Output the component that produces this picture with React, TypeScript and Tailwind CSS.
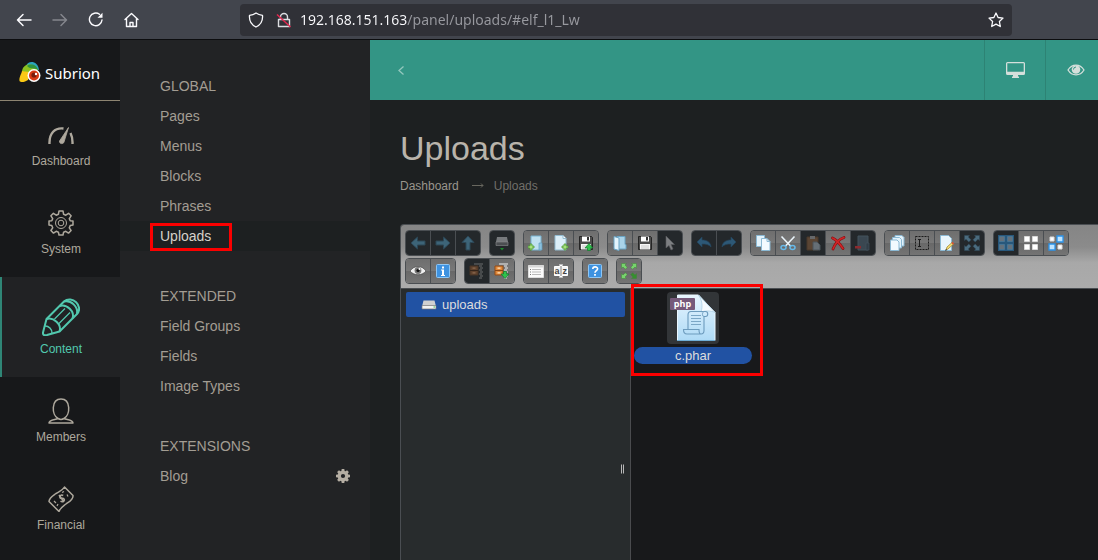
import { useState } from "react";
import type { ReactNode } from "react";

type Tool = { label: string; icon: ReactNode; disabled?: boolean };

function Svg({ size = 16, children }: { size?: number; children: ReactNode }) {
  return (
    <svg width={size} height={size} viewBox={`0 0 ${size} ${size}`} fill="none" aria-hidden>
      {children}
    </svg>
  );
}

/* ---------- toolbar icons ---------- */

const Arrow = ({ turn = 0 }: { turn?: number }) => (
  <Svg>
    <path d="M1 8 7.500 2v4H15v4H7.500v4Z" transform={`rotate(${turn} 8 8)`} fill="#3d6478" stroke="#2c4655" />
  </Svg>
);

const plus = (x: number, y: number) => (
  <path
    d={`M${x + 2} ${y}h2v2h2v2h-2v2h-2v-2h-2v-2h2z`}
    fill="#a6e07c"
    stroke="#4f9a35"
    strokeWidth="0.8"
  />
);

const download = (
  <path d="M9.500 8.500h3V11H15l-4 4.500L7 11h2.500Z" fill="#2fc24c" stroke="#137a2b" strokeWidth="0.7" />
);

const Netmount = () => (
  <Svg>
    <path d="m3 2-1 5h12l-1-5Z" fill="#777a7d" />
    <path d="M2 7h12v3.500H2Z" fill="#4b4e51" stroke="#8a8c8e" strokeWidth="0.6" />
    <path d="M6 13h4l-2 2.500Z" fill="#1e8a2e" />
  </Svg>
);

const Folder = ({ dim = false }: { dim?: boolean }) => (
  <>
    <path d="M3 1h10v14H3Z" fill={dim ? "#3a4751" : "#bfe0f0"} stroke={dim ? "#43525d" : "#78b3d1"} />
    <path d="M11 8h3v7h-3Z" fill={dim ? "#313d46" : "#8cc1de"} stroke={dim ? "#43525d" : "#619fbf"} strokeWidth="0.7" />
  </>
);

const Mkdir = () => (
  <Svg>
    <Folder />
    {plus(0, 9)}
  </Svg>
);

const Mkfile = () => (
  <Svg>
    <path d="M2 .500h8l3 3V15H2Z" fill="#dceff9" stroke="#93bcd2" />
    <path d="M10 .500v3h3" fill="#fff" stroke="#93bcd2" />
    {plus(9, 9)}
  </Svg>
);

const Disk = ({ arrowDown = false }: { arrowDown?: boolean }) => (
  <Svg>
    <path d="M1.500 1.500h12l1 1v12h-13Z" fill="#4d4d4d" stroke="#252525" />
    <path d="M4 1.500h8v5H4Z" fill="#fff" />
    <path d="M9 2h2v3.500H9Z" fill="#333" />
    <path d="M3 9h10v5.500H3Z" fill="#f7f7f7" />
    <path d="M4 11h8M4 13h8" stroke="#c9c9c9" />
    {arrowDown && (
      <path d="M9.500 15.500h3V13H15l-4-4.500L7 13h2.500Z" fill="#2fc24c" stroke="#137a2b" strokeWidth="0.7" />
    )}
  </Svg>
);

const OpenFolder = () => (
  <Svg>
    <path d="M5 1.500h8v8h1v4.500H5Z" fill="#a9d3e9" stroke="#6aa5c5" />
    <path d="M2 1.500 7 3v12.500L2 14Z" fill="#e3f4fc" stroke="#6aa5c5" />
  </Svg>
);

const Pointer = () => (
  <Svg>
    <path d="m4 1 8.500 8.500H9l2 4.500-2 1-2-4.500L4 13Z" fill="#7d7f82" stroke="#5a5c5f" strokeWidth="0.6" />
  </Svg>
);

const Undo = ({ flip = false }: { flip?: boolean }) => (
  <Svg>
    <path
      d="M1 7 6 2v3c5 0 8.500 2 9 7-2-2.500-5-3-9-3v3Z"
      transform={flip ? "translate(16 0) scale(-1 1)" : undefined}
      fill="#2d5876"
      stroke="#24455d"
      strokeWidth="0.7"
    />
  </Svg>
);

const Copy = () => (
  <Svg>
    <path d="M1.500.500h8v11h-8Z" fill="#e2f2fb" stroke="#8bb9d4" />
    <path d="M6.500 3.500h5.500l3 3v9H6.500Z" fill="#f2faff" stroke="#8bb9d4" />
    <path d="M12 3.500v3h3" stroke="#8bb9d4" />
  </Svg>
);

const Cut = () => (
  <Svg>
    <path d="m1.500 1.500 9.500 10M14.500 1.500 5 11.500" stroke="#eaf4fa" strokeWidth="1.600" />
    <ellipse cx="3.500" cy="12.500" rx="2.500" ry="2" stroke="#66b9e9" strokeWidth="1.500" />
    <ellipse cx="12.500" cy="12.500" rx="2.500" ry="2" stroke="#66b9e9" strokeWidth="1.500" />
  </Svg>
);

const Paste = () => (
  <Svg>
    <path d="M2 2h11v13H2Z" fill="#5a4534" stroke="#49382b" />
    <path d="M5 1h5v3H5Z" fill="#66686a" />
    <path d="M8 7h4l3 3v5H8Z" fill="#666f76" stroke="#4b545b" />
  </Svg>
);

const Remove = () => (
  <Svg>
    <path d="M2.500 3C7 5 10 9 13 13.500M14 2.500C9 4 5 9 3 14" stroke="#8d0d10" strokeWidth="2.800" strokeLinecap="round" />
    <path d="M2.500 3C7 5 10 9 13 13.500M14 2.500C9 4 5 9 3 14" stroke="#cf2527" strokeWidth="1.500" strokeLinecap="round" />
  </Svg>
);

const Empty = () => (
  <Svg>
    <Folder dim />
    <path d="M0 11h6v2.500H0Z" fill="#8b2b2f" />
  </Svg>
);

const Duplicate = () => (
  <Svg>
    <path d="M6 .500h7l2 2V11H6Z" fill="#e2f2fb" stroke="#8bb9d4" />
    <path d="M3.500 2.500h7l2 2V13h-9Z" fill="#e2f2fb" stroke="#8bb9d4" />
    <path d="M1.500 5h6.500l2 2v8.500H1.500Z" fill="#f2faff" stroke="#8bb9d4" />
  </Svg>
);

const Rename = () => (
  <Svg>
    <path d="M1.500 1.500h13v13h-13Z" stroke="#1b1b1b" strokeDasharray="2 1" />
    <path d="M4 4.500h3M4 11.500h3M5.500 4v8" stroke="#1b1b1b" />
  </Svg>
);

const Edit = () => (
  <Svg>
    <path d="M1.500.500h8l3 3v12h-11Z" fill="#e8f5fc" stroke="#8bb9d4" />
    <path d="m7 15 1-3 5-4.500 1.500 1.500-5.500 5Z" fill="#f5df77" stroke="#9a7d22" strokeWidth="0.7" />
    <path d="m13 7.500 1.500 1.500" stroke="#df4b32" strokeWidth="1.600" />
    <path d="m6 16 1-2 1 1Z" fill="#222" />
  </Svg>
);

const turns = [0, 90, 180, 270];

const Resize = () => (
  <Svg>
    {turns.map((turn) => (
      <path
        key={turn}
        transform={`rotate(${turn} 8 8)`}
        d="M.500.500h5L4.300 2 7 4.800 4.800 7 2 4.300.500 5.500Z"
        fill="#4a6b7e"
        stroke="#304b5b"
        strokeWidth="0.5"
      />
    ))}
  </Svg>
);

const Fullscreen = () => (
  <Svg size={18}>
    {turns.map((turn) => (
      <path
        key={turn}
        transform={`rotate(${turn} 9 9)`}
        d="M1.500 1.500h5L5 3l2.300 2.300-2 2L3 5 1.500 6.500Z"
        fill={turn === 180 ? "#368f2f" : "#77d46c"}
        stroke="#44803e"
        strokeWidth="0.5"
      />
    ))}
  </Svg>
);

const SelectAll = () => (
  <Svg>
    <path d="M0 0h16v16H0Z" fill="#28587c" />
    <path d="M1.500 1.500h5v5h-5zM9.500 1.500h5v5h-5zM1.500 9.500h5v5h-5zM9.500 9.500h5v5h-5z" fill="#64717c" stroke="#487492" />
  </Svg>
);

const SelectNone = () => (
  <Svg>
    <path d="M1.500 1.500h5v5h-5zM9.500 1.500h5v5h-5zM1.500 9.500h5v5h-5zM9.500 9.500h5v5h-5z" fill="#fff" stroke="#d7d7d7" />
  </Svg>
);

const SelectInvert = () => (
  <Svg>
    <path d="M2 2h4v4H2zM10 10h4v4h-4z" fill="#fff" stroke="#ddd" />
    <path d="M9 1h6v6H9zM1 9h6v6H1z" fill="#bfe4ff" stroke="#2b94ec" strokeWidth="1.300" />
  </Svg>
);

const Look = () => (
  <Svg>
    <path d="M0 8c4-6 12-6 16 0-4 5-12 5-16 0Z" fill="#efefef" stroke="#444" strokeWidth="0.7" />
    <circle cx="8" cy="7.500" r="3.400" fill="#777" />
    <circle cx="8" cy="7.500" r="1.600" fill="#111" />
    <circle cx="9.500" cy="6" r="1" fill="#fff" />
  </Svg>
);

const Info = () => (
  <Svg>
    <rect x="1.500" y="1.500" width="13" height="13" rx="1" fill="#3e92e0" stroke="#8dc6f5" />
    <path d="M7 3.500h2v2H7ZM6 6.500h3V12h1v1H6v-1h1V7.500H6Z" fill="#fff" />
  </Svg>
);

const Help = () => (
  <Svg>
    <rect x="1.500" y="1.500" width="13" height="13" rx="1" fill="#3e92e0" stroke="#8dc6f5" />
    <path d="M5.800 6c0-2.800 4.800-2.800 4.800-.200C10.600 7.700 8 7.500 8 9.800" stroke="#fff" strokeWidth="1.600" />
    <path d="M7.100 11h1.800v1.800H7.100Z" fill="#fff" />
  </Svg>
);

const Archive = ({ dim = false }: { dim?: boolean }) => (
  <Svg>
    <path d="M1 3h8v9H1Z" fill={dim ? "#60422d" : "#e0893b"} stroke={dim ? "#493526" : "#934d18"} />
    <path d="M1 7.500h8" stroke={dim ? "#34251b" : "#8a4614"} />
    <path d="M3.500 5.200h3M3.500 9.800h3" stroke={dim ? "#8b6a51" : "#ffe1bb"} strokeWidth="1.300" />
    <path d="M5 1h9" stroke={dim ? "#6a6c6e" : "#eee"} strokeWidth="1.200" />
    <path d="M10 3h3M11 5h3M10 7h3M11 9h3M10 11h3M11 13h3M10 15h3" stroke={dim ? "#6a6c6e" : "#eee"} />
    {!dim && download}
  </Svg>
);

const ListView = () => (
  <Svg>
    <path d="M.500 2.500h15v12H.500Z" fill="#fbfbfb" stroke="#ddd" />
    <path d="M.500 2.500h15v2H.500Z" fill="#d8d8d8" />
    <path d="M4 6.500h9M4 9h9M4 11.500h9" stroke="#bbb" />
    <path d="M2 6.500h1M2 9h1M2 11.500h1" stroke="#777" />
  </Svg>
);

const Sort = () => (
  <Svg>
    <path d="M1.500 3.500h13v9h-13Z" fill="#f4f4f4" stroke="#fff" />
    <text x="1.500" y="11" fill="#444" fontSize="9" fontWeight="700" fontFamily="Liberation Sans, sans-serif">
      a
    </text>
    <text x="9.500" y="11" fill="#444" fontSize="9" fontWeight="700" fontFamily="Liberation Sans, sans-serif">
      z
    </text>
    <path d="M8 3v10M6.500 1.500 8 3l1.500-1.500M6.500 14.500 8 13l1.500 1.500" stroke="#fff" strokeWidth="1.500" />
    <path d="M8 3v10" stroke="#444" strokeWidth="0.7" />
  </Svg>
);

const toolbar: Tool[][][] = [
  [
    [
      { label: "Back", icon: <Arrow />, disabled: true },
      { label: "Forward", icon: <Arrow turn={180} />, disabled: true },
      { label: "Up", icon: <Arrow turn={90} />, disabled: true },
    ],
    [{ label: "Mount network volume", icon: <Netmount />, disabled: true }],
    [
      { label: "New folder", icon: <Mkdir /> },
      { label: "New file", icon: <Mkfile /> },
      { label: "Upload files", icon: <Disk arrowDown /> },
    ],
    [
      { label: "Open", icon: <OpenFolder /> },
      { label: "Download", icon: <Disk /> },
      { label: "Get files", icon: <Pointer />, disabled: true },
    ],
    [
      { label: "Undo", icon: <Undo />, disabled: true },
      { label: "Redo", icon: <Undo flip />, disabled: true },
    ],
    [
      { label: "Copy", icon: <Copy /> },
      { label: "Cut", icon: <Cut /> },
      { label: "Paste", icon: <Paste />, disabled: true },
      { label: "Delete", icon: <Remove /> },
      { label: "Empty folder", icon: <Empty />, disabled: true },
    ],
    [
      { label: "Duplicate", icon: <Duplicate /> },
      { label: "Rename", icon: <Rename /> },
      { label: "Edit file", icon: <Edit /> },
      { label: "Resize image", icon: <Resize />, disabled: true },
    ],
    [
      { label: "Select all", icon: <SelectAll />, disabled: true },
      { label: "Select none", icon: <SelectNone /> },
      { label: "Invert selection", icon: <SelectInvert /> },
    ],
  ],
  [
    [
      { label: "Preview", icon: <Look /> },
      { label: "Get info", icon: <Info /> },
    ],
    [
      { label: "Extract files", icon: <Archive dim />, disabled: true },
      { label: "Create archive", icon: <Archive /> },
    ],
    [
      { label: "List view", icon: <ListView /> },
      { label: "Sort", icon: <Sort /> },
    ],
    [{ label: "Help", icon: <Help /> }],
    [{ label: "Full screen", icon: <Fullscreen /> }],
  ],
];

/* ---------- sidebar icons ---------- */

const Gauge = () => (
  <svg width="26" height="26" viewBox="0 0 26 26" fill="none" stroke="currentColor" aria-hidden>
    <path d="M1.500 22C1 11 7 5.500 15.500 6.500M22.500 11c1.500 3 2.200 6.500 2 11" strokeWidth="2.400" />
    <path d="M20.500 5.500 16 20c-.600 2.500-5 2-4.500-1Z" fill="currentColor" strokeWidth="0.8" />
  </svg>
);

const Gear = () => (
  <svg width="26" height="26" viewBox="0 0 26 26" fill="none" stroke="currentColor" aria-hidden>
    <path
      strokeWidth="1.500"
      strokeLinejoin="round"
      d="M11 1h4l.600 3.300 2.200.900 2.800-1.900 2.500 2.500-1.800 2.800.9 2.200L25 11v4l-2.800.6-.9 2.200 1.800 2.700-2.600 2.600-2.700-1.800-2.200.9L15 25h-4l-.600-2.800-2.200-.9-2.700 1.800-2.600-2.600 1.800-2.700-.9-2.200L1 15v-4l2.800-.2.900-2.200-1.800-2.800L5.400 3.300l2.800 1.900 2.200-.9Z"
    />
    <circle cx="13" cy="13" r="5.500" strokeWidth="1" />
    <circle cx="13" cy="13" r="2.800" strokeWidth="1" />
  </svg>
);

const Pencil = () => (
  <svg width="38" height="38" viewBox="0 0 38 38" fill="none" stroke="currentColor" strokeWidth="2" strokeLinejoin="round" aria-hidden>
    <path d="M1 34.500 4.500 21 22 3.500C30-3.500 42 8.500 35 16L17.500 33.500 5 37c-3 .6-4.300-.2-4-2.500Z" />
    <path d="M4.500 21c7-2.500 15.500 5.500 13 12.500M17.500 8c7.500-2.500 15.500 5.500 13 12.500M22 3.500c7-2 14.500 5.500 13 12.500" />
    <path d="M2.500 28c4-.5 8 3.500 7.500 7.500" strokeWidth="1.500" />
    <path d="M12.500 21 23 10.500M17 25.500 28 14.500" strokeWidth="1.200" />
  </svg>
);

const Person = () => (
  <svg width="26" height="26" viewBox="0 0 26 26" fill="none" stroke="currentColor" strokeWidth="1.500" aria-hidden>
    <path d="M10 20.500C3.500 17 3 1 13 1s9.500 16 3 19.500c3 1.300 9 1 9 4.500H1c0-3.500 6-3.200 9-4.500Z" strokeLinejoin="round" />
    <path d="M10 20.500c2 1.200 4 1.200 6 0" />
  </svg>
);

const Money = () => (
  <svg width="26" height="26" viewBox="0 0 26 26" fill="none" stroke="currentColor" strokeWidth="1.500" strokeLinejoin="round" aria-hidden>
    <path d="M16.500 1 25 9.500c.500 4-3.500 6-7 8.500-4 3-5.500 3.500-7 7.500L1 15.500c0-3.500 3.500-5.500 7-8C12 5 14.500 4.500 16.500 1Z" />
    <path d="M15.200 9.500c-2-1.300-4.400.6-3.200 2.300 1 1.400 3-.3 4 1.100 1.400 2-1.500 3.800-3.500 2.300M11 9l5 7" />
    <path d="m14 6.500 2-1M20 10.500l-1-2M9 20l1-2M6 15l2 2" strokeWidth="1.200" />
  </svg>
);

const mainNav = [
  { name: "Dashboard", icon: <Gauge /> },
  { name: "System", icon: <Gear /> },
  { name: "Content", icon: <Pencil /> },
  { name: "Members", icon: <Person /> },
  { name: "Financial", icon: <Money /> },
];

const subNav = [
  { title: "GLOBAL", links: ["Pages", "Menus", "Blocks", "Phrases", "Uploads"] },
  { title: "EXTENDED", links: ["Field Groups", "Fields", "Image Types"] },
  { title: "EXTENSIONS", links: ["Blog"] },
];

function BrowserBar() {
  const [url, setUrl] = useState("192.168.151.163/panel/uploads/#elf_l1_Lw");

  return (
    <div className="flex h-10 shrink-0 items-center border-b border-[#0c0d0f] bg-[#42454d] pl-4 pr-[86px] text-[#fbfbfe]">
      <div className="flex w-56 shrink-0 gap-5">
        <button type="button" aria-label="Go back">
          <Svg>
            <path d="M15 8H1.500M7 2.500 1.500 8 7 13.500" stroke="currentColor" strokeWidth="1.500" strokeLinecap="round" strokeLinejoin="round" />
          </Svg>
        </button>
        <button type="button" aria-label="Go forward" disabled className="text-[#85878d]">
          <Svg>
            <path d="M1 8h13.500M9 2.500 14.500 8 9 13.500" stroke="currentColor" strokeWidth="1.500" strokeLinecap="round" strokeLinejoin="round" />
          </Svg>
        </button>
        <button type="button" aria-label="Reload">
          <Svg>
            <path d="M11.500 2.300A6.300 6.300 0 1 0 14 8" stroke="currentColor" strokeWidth="1.400" strokeLinecap="round" />
            <path d="M14.500.800V5.800H9.500Z" fill="currentColor" />
          </Svg>
        </button>
        <button type="button" aria-label="Home">
          <Svg>
            <path d="m1 7.500 6.500-6 6.500 6M2.500 6.500v8h10v-8M6 14.500v-4h3v4" stroke="currentColor" strokeWidth="1.400" strokeLinecap="round" strokeLinejoin="round" />
          </Svg>
        </button>
      </div>
      <div className="flex h-8 min-w-0 flex-1 items-center rounded bg-[#303137] px-2">
        <Svg>
          <path d="M8 1c2 1.400 4 2 6.500 2.300C15 9 12.500 13 8 15 3.500 13 1 9 1.500 3.300 4 3 6 2.400 8 1Z" stroke="currentColor" strokeWidth="1.300" strokeLinejoin="round" />
        </Svg>
        <span className="ml-3">
          <Svg>
            <path d="M2.500 7.500h11v7h-11ZM4.500 7.500V5a3.500 3.500 0 0 1 7 0v2.500" stroke="#dcdde1" strokeWidth="1.400" strokeLinejoin="round" />
            <path d="m1 2.500 13.500 12.500" stroke="#e22850" strokeWidth="1.500" />
          </Svg>
        </span>
        <input
          aria-label="Address"
          value={url}
          onChange={(e) => setUrl(e.target.value)}
          className="ml-2 min-w-0 flex-1 bg-[linear-gradient(90deg,#fbfbfe_107px,#98999f_107px)] bg-clip-text font-['Noto_Sans',sans-serif] text-sm text-transparent caret-white outline-none"
        />
        <button type="button" aria-label="Bookmark this page">
          <Svg>
            <path d="m8 1 2.100 4.500 4.900.600-3.600 3.400.900 5L8 12.100l-4.300 2.400.900-5L1 6.100l4.900-.600Z" stroke="currentColor" strokeWidth="1.300" strokeLinejoin="round" />
          </Svg>
        </button>
      </div>
    </div>
  );
}

function Logo() {
  return (
    <a href="#" className="flex h-[61px] items-center gap-1 border-b border-[#8d8471] pl-[19px] pt-1 text-white">
      <svg width="22" height="22" viewBox="0 0 22 22" aria-hidden>
        <path d="M7 5C9-1 19-.500 20 9L12 8Z" fill="#2aa5bd" />
        <path d="M3 11C3 2 15 1 19 9l-7 8Z" fill="#8dc21f" />
        <path d="M8 5c4-3 10-1 11 4-4-3-7 0-11-4Z" fill="#2f9440" />
        <path d="M3 10C6 11 10 10 12 12l-3 7C6 21 2 22 .500 20 0 16 2 14 3 10Z" fill="#fbc914" />
        <circle cx="15" cy="14.500" r="6.500" fill="#fff" />
        <circle cx="15" cy="14.500" r="5" fill="#d83a15" />
        <circle cx="15" cy="14" r="2.600" fill="#771d0e" />
        <circle cx="17" cy="13" r="1.200" fill="#fff" />
      </svg>
      <span className="pt-0.5 font-['Noto_Sans',sans-serif] text-[15px] leading-5">Subrion</span>
    </a>
  );
}

function FileManager() {
  return (
    <section className="overflow-hidden rounded-tl border-l border-t border-[#4a4e52] font-['Liberation_Sans',Arial,sans-serif] text-[13px] text-[#dddddd]">
      <div className="flex flex-col gap-0.5 border-b border-[#4a4e52] bg-[linear-gradient(#858585,#8b8b8b_35%,#a8a8a8_60%,#ababab)] px-1 pb-1 pt-[5px]">
        {toolbar.map((row, i) => (
          <div key={i} className="flex gap-2">
            {row.map((group) => (
              <div
                key={group[0].label}
                className="flex shrink-0 divide-x divide-[#4a4e52] overflow-hidden rounded border border-[#4a4e52]"
              >
                {group.map((tool) => (
                  <button
                    key={tool.label}
                    type="button"
                    aria-label={tool.label}
                    disabled={tool.disabled}
                    className="box-content flex h-6 w-6 items-center justify-center bg-[linear-gradient(#6e6e6e,#787878_50%,#686868_50%,#747474)] disabled:bg-[#24282b] disabled:bg-none"
                  >
                    {tool.icon}
                  </button>
                ))}
              </div>
            ))}
          </div>
        ))}
      </div>

      <div className="flex h-[360px]">
        <div className="relative w-[230px] shrink-0 border-r border-[#4a4b4e] bg-[#282c2d] px-[5px] py-[3px]">
          <button type="button" className="flex h-[25px] w-full items-center gap-[5px] rounded-xs bg-[#2152a3] pl-[15px]">
            <svg width="16" height="10" viewBox="0 0 16 10" aria-hidden>
              <path d="M2.500.500h11l1.500 6H1Z" fill="#d0d0d0" />
              <path d="M1 5.500h14v3.500H1Z" fill="#f2f2f2" stroke="#777" strokeWidth="0.7" />
              <path d="M12.500 6.500H14v1h-1.500Z" fill="#36c54a" />
            </svg>
            uploads
          </button>
          <div className="absolute right-1.5 top-1/2 flex h-[9px] -translate-y-1/2 gap-px" aria-hidden>
            <span className="w-px bg-[#b9b9b9]" />
            <span className="w-px bg-[#b9b9b9]" />
          </div>
        </div>

        <div className="flex-1 bg-[#18191b] pl-0.5 pt-[3px]">
          <div className="relative w-[120px]">
            <button type="button" className="flex w-full flex-col items-center gap-[3px]">
              <span className="flex h-[52px] w-[52px] items-center justify-center rounded bg-[#323538]">
                <svg width="48" height="48" viewBox="0 0 48 48" aria-hidden>
                  <defs>
                    <linearGradient id="page" x1="0" y1="0" x2="0" y2="1">
                      <stop offset="0" stopColor="#e7f5fe" />
                      <stop offset="1" stopColor="#aedaf6" />
                    </linearGradient>
                  </defs>
                  <path d="M8.500 1h21L46 18.500V46.500H8.500Z" fill="url(#page)" stroke="#eaf7ff" />
                  <path d="M8 46.500h38" stroke="#6faed5" />
                  <path d="M29.500 1 46 18.500C41 16 35 17 32 18c2-6 1-12-2.500-17Z" fill="#f6fbff" stroke="#a5cae1" strokeWidth="0.7" />
                  <path
                    d="M19 35V21c0-3 1-3.500 3-3.500h14.500c3 0 3 5 0 5H35v14c0 3-1 3.500-3 3.500H18c-3 0-3.500-2-3.500-4.500H30c0 3 .5 4.500 2 4.500"
                    fill="none"
                    stroke="#6c9bbd"
                    strokeWidth="1.100"
                  />
                  <path d="M35 22.500c-2 0-2-3-.5-5M22 21.500h10M22 24.500h10M22 27.500h10M22 30.500h10" fill="none" stroke="#7ba7c6" />
                  <rect x="1" y="4" width="25" height="12" rx="1" fill="#76597a" />
                  <text x="13.500" y="13" textAnchor="middle" fill="#fff" fontSize="9" fontWeight="700" fontFamily="Open Sans, sans-serif">
                    php
                  </text>
                </svg>
              </span>
              <span className="w-[118px] rounded-full bg-[#2152a3] text-center leading-[17px]">c.phar</span>
            </button>
            <div className="pointer-events-none absolute -left-0.5 -top-2 h-[92px] w-[132px] border-3 border-[#fb0000]" />
          </div>
        </div>
      </div>
    </section>
  );
}

export default function App() {
  const [section, setSection] = useState("Content");
  const [page, setPage] = useState("Uploads");

  return (
    <div className="flex h-screen flex-col overflow-hidden bg-[#1d2021] font-['Liberation_Sans',Arial,sans-serif] text-[#a39d93]">
      <BrowserBar />

      <div className="flex min-h-0 flex-1">
        <aside className="w-[120px] shrink-0 overflow-hidden bg-[#17181a]">
          <Logo />
          <nav>
            {mainNav.map((item) => (
              <a
                key={item.name}
                href="#"
                onClick={() => setSection(item.name)}
                className={`flex flex-col items-center gap-[5px] border-l-2 pb-5 pt-[21px] text-xs leading-4 ${
                  item.name === section
                    ? "border-[#2f8676] bg-[#212224] text-[#52c8ae]"
                    : "border-transparent text-[#aea89d]"
                }`}
              >
                {item.icon}
                {item.name}
              </a>
            ))}
          </nav>
        </aside>

        <nav className="flex w-[250px] shrink-0 flex-col gap-[30px] bg-[#222325] pt-[31px] text-sm leading-[30px]">
          {subNav.map((group) => (
            <div key={group.title}>
              <h2 className="px-10">{group.title}</h2>
              <ul>
                {group.links.map((link) => (
                  <li
                    key={link}
                    className={`relative flex items-center justify-between pl-10 pr-5 ${
                      link === page ? "bg-[#1d2021] text-[#d6d1c9]" : ""
                    }`}
                  >
                    <a href="#" onClick={() => setPage(link)}>
                      {link}
                    </a>
                    {link === "Blog" && (
                      <button type="button" aria-label="Blog settings" className="text-[#b5aea3]">
                        <svg width="14" height="14" viewBox="0 0 14 14" aria-hidden>
                          {[0, 45, 90, 135].map((turn) => (
                            <path key={turn} d="M5.700 0h2.600l.5 3h-3.600ZM5.700 14h2.600l.5-3h-3.600Z" transform={`rotate(${turn} 7 7)`} fill="currentColor" />
                          ))}
                          <circle cx="7" cy="7" r="3.700" fill="none" stroke="currentColor" strokeWidth="3.200" />
                        </svg>
                      </button>
                    )}
                    {link === "Uploads" && (
                      <span className="pointer-events-none absolute left-[30px] top-0.5 h-7 w-[82px] border-3 border-[#fb0000]" />
                    )}
                  </li>
                ))}
              </ul>
            </div>
          ))}
        </nav>

        <div className="flex min-w-0 flex-1 flex-col overflow-hidden">
          <header className="flex h-[60px] shrink-0 items-center bg-[#339585] text-[#d5dfdb]">
            <button type="button" aria-label="Collapse menu" className="ml-7 text-[#94c8be]">
              <svg width="8" height="10" viewBox="0 0 8 10" fill="none" aria-hidden>
                <path d="M5.500 1.500 1 5.500l4.500 4" stroke="currentColor" strokeWidth="1.300" />
              </svg>
            </button>
            <div className="-mr-2 ml-auto flex h-full">
              <button type="button" aria-label="Admin home" className="flex w-[61px] items-center justify-center border-l border-[#2d8374]">
                <svg width="19" height="16" viewBox="0 0 19 16" aria-hidden>
                  <path
                    fillRule="evenodd"
                    fill="currentColor"
                    d="M1.500 0h16Q19 0 19 1.500v10q0 1.500-1.500 1.500H12v1.500h1V16H6v-1.500h1V13H1.500Q0 13 0 11.500v-10Q0 0 1.500 0ZM1.300 1.300v8.400h16.400v-8.400Z"
                  />
                </svg>
              </button>
              <button type="button" aria-label="View site" className="flex w-[61px] items-center justify-center border-l border-[#2d8374]">
                <svg width="18" height="12" viewBox="0 0 18 12" fill="none" aria-hidden>
                  <path d="M1 6c4-6.500 12-6.500 16 0-4 6.500-12 6.500-16 0Z" stroke="currentColor" strokeWidth="1.300" />
                  <circle cx="9" cy="5.500" r="4.300" fill="currentColor" />
                  <path d="M6.500 5.500Q6.500 3 9 3" stroke="#339585" />
                </svg>
              </button>
            </div>
          </header>

          <main className="pl-[30px]">
            <h1 className="pt-7 text-[34px] leading-10 text-[#b9b4ab]">Uploads</h1>
            <nav aria-label="Breadcrumb" className="mb-[30px] mt-2.5 flex items-center text-xs leading-4">
              <a href="#" className="text-[#9a958d]">
                Dashboard
              </a>
              <svg width="12" height="6" viewBox="0 0 12 6" fill="none" className="ml-[13px] mr-2.5" aria-hidden>
                <path d="M0 2.500h11M9 .500l2 2-2 2" stroke="#68675f" />
              </svg>
              <span className="text-[#716f6a]">Uploads</span>
            </nav>
            <FileManager />
          </main>
        </div>
      </div>
    </div>
  );
}
